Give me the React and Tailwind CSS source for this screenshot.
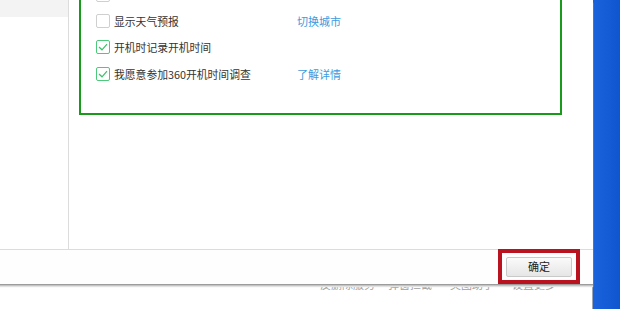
import React from "react";

function Check({ checked }) {
  return (
    <span
      className={
        "w-[14px] h-[14px] rounded-[2px] border flex items-center justify-center bg-white shrink-0 " +
        (checked ? "border-[#4cc97a]" : "border-[#cfcfcf]")
      }
    >
      {checked && (
        <svg width="10" height="8" viewBox="0 0 10 8">
          <path d="M1 4 L4 6.8 L9 1.2" fill="none" stroke="#3bbf6a" strokeWidth="1.2" />
        </svg>
      )}
    </span>
  );
}

function Row({ checked, label, link }) {
  return (
    <div className="flex items-center h-[14px]">
      <div className="flex items-center gap-[4px] w-[201px]">
        <Check checked={checked} />
        <span className="text-[10.8px] text-[#333] leading-none">{label}</span>
      </div>
      {link && <span className="text-[11px] text-[#3c9be0] leading-none">{link}</span>}
    </div>
  );
}

export default function App() {
  const font = { fontFamily: '"Microsoft YaHei","Noto Sans CJK SC",sans-serif' };
  return (
    <div className="relative w-[620px] h-[309px] bg-white overflow-hidden" style={font}>
      {/* background page text, partially covered */}
      <div className="absolute left-0 top-[279px] w-[593px] flex text-[11px] text-[#a0a0a0] leading-none">
        <span className="ml-[320px]">反删除服务</span>
        <span className="ml-[13px]">弹窗拦截</span>
        <span className="ml-[18px]">美图助手</span>
        <span className="ml-[18px]">设置更多</span>
      </div>
      {/* desktop blue strip */}
      <div className="absolute right-0 top-0 w-[28px] h-full bg-gradient-to-r from-[#1a63dc] to-[#0f55d0] border-l border-[#9aa5b5]" />

      {/* dialog window */}
      <div className="absolute left-0 top-0 w-[593px] h-[284px] bg-white flex flex-col shadow-[0_1px_0_#9c9c9c,0_2px_0_#c4c4c4,0_3px_1px_#e2e2e2]">
        <div className="flex flex-1 border-b border-[#dcdcdc]">
          <div className="w-[69px] border-r border-[#dcdcdc] flex flex-col">
            <div className="h-[17px] bg-[#f3f3f3]" />
          </div>
          <div className="flex-1 pl-[10px] pr-[31px]">
            <div className="h-[115px] border-2 border-t-0 border-[#1a9a1a] pl-[15px] flex flex-col">
              <div className="-mt-[12px] h-[14px]">
                <Check checked={false} />
              </div>
              <div className="mt-[12px] flex flex-col gap-[12px]">
                <Row checked={false} label="显示天气预报" link="切换城市" />
                <Row checked label="开机时记录开机时间" />
                <div className="mt-[1px]">
                  <Row checked label="我愿意参加360开机时间调查" link="了解详情" />
                </div>
              </div>
            </div>
          </div>
        </div>
        <div className="h-[34px] flex items-start justify-end pr-[13px] bg-[#fefefe]">
          <div className="w-[82px] h-[35px] border-[4px] border-[#b8131f] flex items-center justify-center -mt-px">
            <div className="w-[66px] h-[20px] border border-[#c9c9c9] rounded-[2px] bg-gradient-to-b from-[#fafafa] to-[#e6e6e6] flex items-center justify-center text-[11px] text-[#222] leading-none">
              确定
            </div>
          </div>
        </div>
      </div>
    </div>
  );
}
